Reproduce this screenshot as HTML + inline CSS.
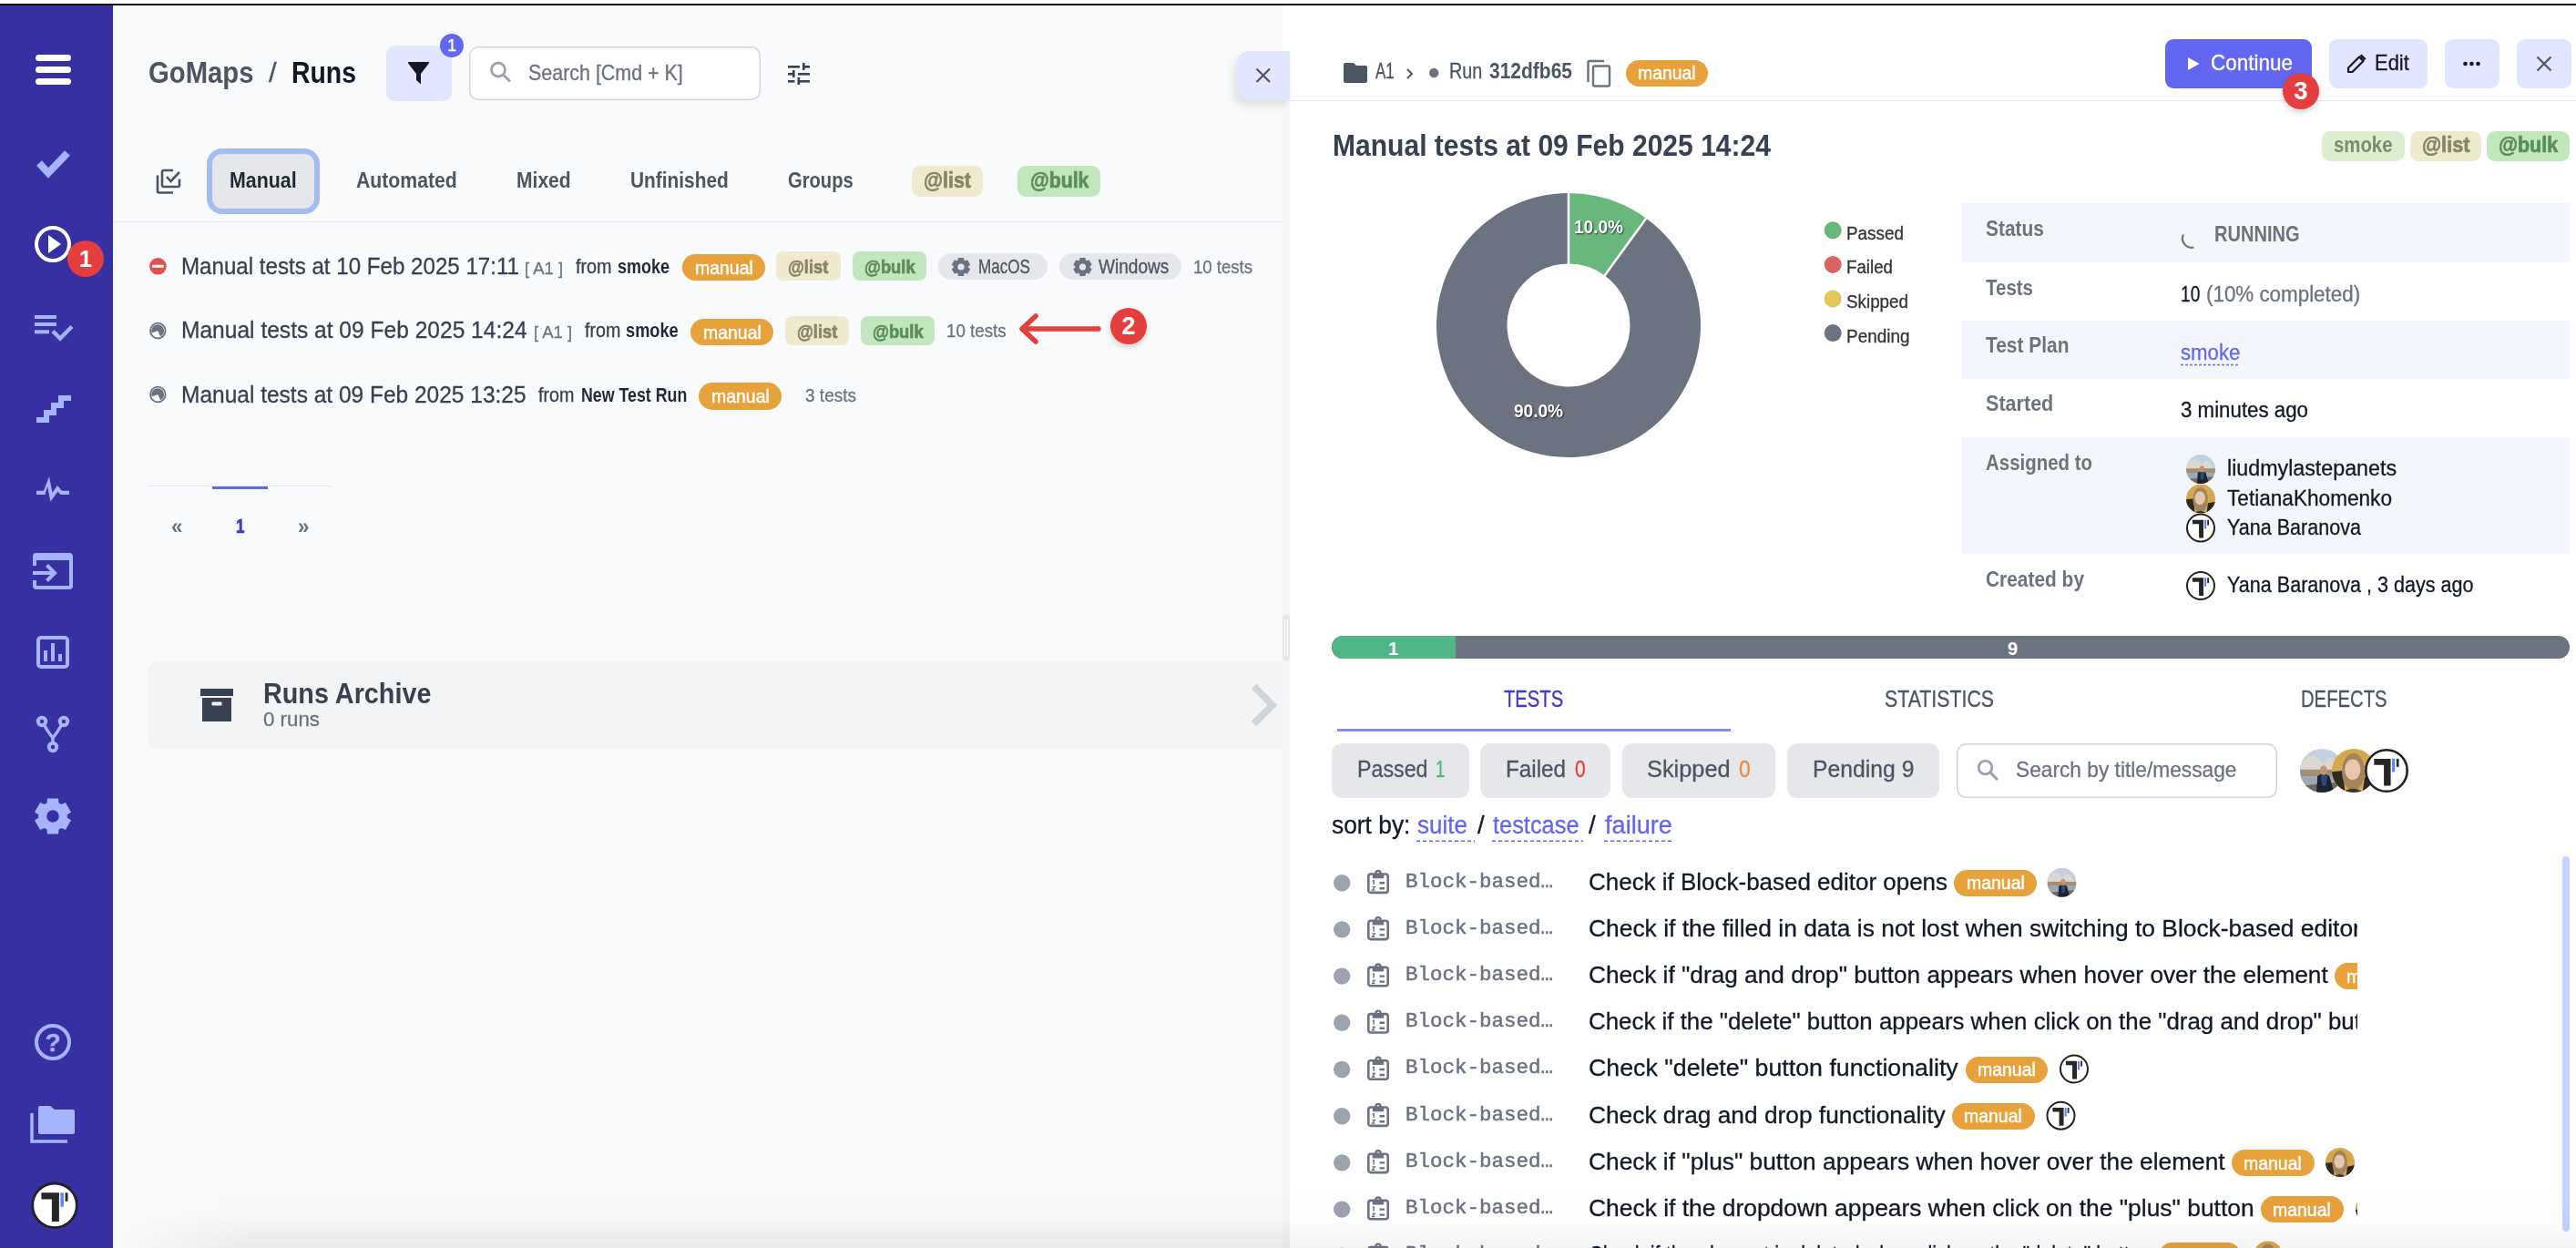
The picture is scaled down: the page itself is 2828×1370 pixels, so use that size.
<!DOCTYPE html>
<html><head><meta charset="utf-8"><title>Runs</title>
<style>
html,body{margin:0;padding:0;width:2828px;height:1370px;overflow:hidden;background:#fff;font-family:'Liberation Sans', sans-serif;}
#root{position:relative;width:2828px;height:1370px;overflow:hidden;}
</style></head><body><div id="root">
<div style="position:absolute;left:0px;top:0px;width:2828px;height:4px;background:#ffffff;border-radius:0px;"></div><div style="position:absolute;left:0px;top:4px;width:2828px;height:2px;background:#111111;border-radius:0px;"></div><div style="position:absolute;left:0px;top:6px;width:124px;height:1364px;background:#3730a3;border-radius:0px;"></div><div style="position:absolute;left:124px;top:6px;width:1284px;height:1364px;background:#f9fafb;border-radius:0px;"></div><div style="position:absolute;left:1408px;top:6px;width:8px;height:104px;background:#ffffff;border-radius:0px;"></div><div style="position:absolute;left:1408px;top:110px;width:8px;height:1260px;background:#f6f6f7;border-radius:0px;"></div><div style="position:absolute;left:1408px;top:674px;width:8px;height:52px;background:#e5e7eb;border-radius:4px;"></div><div style="position:absolute;left:1416px;top:6px;width:1412px;height:1364px;background:#ffffff;border-radius:0px;"></div><div style="position:absolute;left:424px;top:50px;width:72px;height:61px;background:#e0e7ff;border-radius:10px;"></div><div style="position:absolute;left:515px;top:51px;width:320px;height:59px;background:#ffffff;border-radius:10px;box-shadow:inset 0 0 0 1.5px #d1d5db;"></div><div style="position:absolute;left:226.5px;top:162.6px;width:124.80000000000001px;height:72.4px;background:#e5e7eb;border-radius:17px;box-shadow:inset 0 0 0 6px #a3bcf3;"></div><div style="position:absolute;left:1001px;top:182px;width:78px;height:34px;background:#efe9d0;border-radius:9px;"></div><div style="position:absolute;left:1117px;top:182px;width:91px;height:34px;background:#c2e7bf;border-radius:9px;"></div><div style="position:absolute;left:124px;top:243px;width:1284px;height:1px;background:#e5e7eb;border-radius:0px;"></div><div style="position:absolute;left:1358px;top:56px;width:58px;height:54px;background:#e0e7ff;border-radius:14px 0 0 14px;box-shadow:-4px 6px 10px rgba(0,0,0,0.10);"></div><div style="position:absolute;left:749px;top:279px;width:91px;height:28.5px;background:#e8a23b;border-radius:14.25px;"></div><div style="position:absolute;left:852px;top:276px;width:70.70000000000005px;height:31.5px;background:#efe9d0;border-radius:8px;"></div><div style="position:absolute;left:936px;top:276px;width:81px;height:31.5px;background:#c2e7bf;border-radius:8px;"></div><div style="position:absolute;left:1030px;top:277.7px;width:120px;height:29.80000000000001px;background:#e5e7eb;border-radius:15px;"></div><div style="position:absolute;left:1163px;top:277.7px;width:134px;height:29.80000000000001px;background:#e5e7eb;border-radius:15px;"></div><div style="position:absolute;left:758px;top:350px;width:91px;height:29px;background:#e8a23b;border-radius:14.5px;"></div><div style="position:absolute;left:862px;top:347px;width:70px;height:32px;background:#efe9d0;border-radius:8px;"></div><div style="position:absolute;left:945px;top:347px;width:81px;height:32px;background:#c2e7bf;border-radius:8px;"></div><div style="position:absolute;left:1219px;top:338px;width:40px;height:40px;background:#e53e3e;border-radius:50%;box-shadow:0 3px 6px rgba(0,0,0,0.18);"></div><div style="position:absolute;left:767px;top:420px;width:91px;height:30px;background:#e8a23b;border-radius:15.0px;"></div><div style="position:absolute;left:162px;top:533px;width:203px;height:1px;background:#e5e7eb;border-radius:0px;"></div><div style="position:absolute;left:233px;top:534px;width:61px;height:3px;background:#6366f1;border-radius:0px;"></div><div style="position:absolute;left:162px;top:726px;width:1246px;height:96px;background:#f3f4f6;border-radius:12px 0 0 12px;"></div><div style="position:absolute;left:1416px;top:110px;width:1412px;height:1px;background:#e5e7eb;border-radius:0px;"></div><div style="position:absolute;left:1785px;top:66px;width:90px;height:29px;background:#e8a23b;border-radius:14.5px;"></div><div style="position:absolute;left:2377px;top:43px;width:161px;height:54px;background:#6366f1;border-radius:9px;"></div><div style="position:absolute;left:2557px;top:43px;width:108px;height:54px;background:#e0e7ff;border-radius:9px;"></div><div style="position:absolute;left:2684px;top:43px;width:60px;height:54px;background:#e0e7ff;border-radius:9px;"></div><div style="position:absolute;left:2763px;top:43px;width:60px;height:54px;background:#e0e7ff;border-radius:9px;"></div><div style="position:absolute;left:2506px;top:80px;width:40px;height:40px;background:#e53e3e;border-radius:50%;box-shadow:0 3px 6px rgba(0,0,0,0.18);"></div><div style="position:absolute;left:2549px;top:144px;width:91px;height:32.5px;background:#dcedd0;border-radius:9px;"></div><div style="position:absolute;left:2646px;top:144px;width:78px;height:32.5px;background:#efe9d0;border-radius:9px;"></div><div style="position:absolute;left:2730px;top:144px;width:91px;height:32.5px;background:#c2e7bf;border-radius:9px;"></div><div style="position:absolute;left:2154px;top:223px;width:667px;height:65px;background:#f3f6fd;border-radius:0px;"></div><div style="position:absolute;left:2154px;top:352px;width:667px;height:64px;background:#f3f6fd;border-radius:0px;"></div><div style="position:absolute;left:2154px;top:480px;width:667px;height:127.5px;background:#f3f6fd;border-radius:0px;"></div><div style="position:absolute;left:1462px;top:698px;width:1359px;height:24.5px;background:#6b7280;border-radius:12.25px;"></div><div style="position:absolute;left:1462px;top:698px;width:136px;height:24.5px;background:#52b586;border-radius:12.25px 0 0 12.25px;"></div><div style="position:absolute;left:1468px;top:800px;width:432px;height:3px;background:#818cf8;border-radius:0px;"></div><div style="position:absolute;left:1462px;top:816.4px;width:151px;height:59.200000000000045px;background:#e5e7eb;border-radius:11px;"></div><div style="position:absolute;left:1625px;top:816.4px;width:143px;height:59.200000000000045px;background:#e5e7eb;border-radius:11px;"></div><div style="position:absolute;left:1781px;top:816.4px;width:168px;height:59.200000000000045px;background:#e5e7eb;border-radius:11px;"></div><div style="position:absolute;left:1962px;top:816.4px;width:167px;height:59.200000000000045px;background:#e5e7eb;border-radius:11px;"></div><div style="position:absolute;left:2148px;top:816px;width:352px;height:59.5px;background:#fff;border-radius:11px;box-shadow:inset 0 0 0 1.5px #d1d5db;"></div><div style="position:absolute;left:2145.3px;top:954.7px;width:90.5px;height:29.0px;background:#e8a23b;border-radius:14.5px;"></div><div style="position:absolute;left:2563px;top:1057.1000000000001px;width:90.5px;height:29.0px;background:#e8a23b;border-radius:14.5px;"></div><div style="position:absolute;left:2157.5px;top:1159.5px;width:90.5px;height:29.0px;background:#e8a23b;border-radius:14.5px;"></div><div style="position:absolute;left:2143px;top:1210.7px;width:90.5px;height:29.0px;background:#e8a23b;border-radius:14.5px;"></div><div style="position:absolute;left:2450px;top:1261.9px;width:90.5px;height:29.0px;background:#e8a23b;border-radius:14.5px;"></div><div style="position:absolute;left:2482px;top:1313.1000000000001px;width:90.5px;height:29.0px;background:#e8a23b;border-radius:14.5px;"></div><div style="position:absolute;left:2369.7px;top:1364.3000000000002px;width:90.5px;height:29.0px;background:#e8a23b;border-radius:14.5px;"></div>
<svg width="2828" height="1370" viewBox="0 0 2828 1370" style="position:absolute;left:0;top:0">
<rect x="39" y="60" width="39" height="7" rx="3.5" fill="#fff"/><rect x="39" y="73" width="39" height="7" rx="3.5" fill="#fff"/><rect x="39" y="86" width="39" height="7" rx="3.5" fill="#fff"/><path d="M43 179 L53 190 L74 168" fill="none" stroke="#a5b4fc" stroke-width="8" stroke-linecap="butt" stroke-linejoin="miter"/><circle cx="58" cy="268" r="18" fill="none" stroke="#fff" stroke-width="4"/><path d="M53 258 L67 268 L53 278 Z" fill="#fff"/><circle cx="94" cy="284" r="20" fill="#e53e3e"/><rect x="38" y="346" width="24" height="4" fill="#a5b4fc"/><rect x="38" y="354" width="24" height="4" fill="#a5b4fc"/><rect x="38" y="362.3" width="16" height="4" fill="#a5b4fc"/><path d="M58 363.5 L66 371.5 L79 358.5" fill="none" stroke="#a5b4fc" stroke-width="4.5"/><path d="M40 461 L51 461 L51 453 L59 453 L59 445 L67 445 L67 437 L78 437" fill="none" stroke="#a5b4fc" stroke-width="6" stroke-linejoin="miter" stroke-miterlimit="10"/><path d="M40 538.7 L48 538.7 L54 523 L57.5 541 L63 533 L68 538.7 L76 538.7 L76 543 L66.5 543 L63.5 539.5 L55.5 550.5 L52 534 L49.5 543 L40 543 Z" fill="#a5b4fc"/><path d="M38 621 L38 611 Q38 609 40 609 L76 609 Q78 609 78 611 L78 643 Q78 645 76 645 L40 645 Q38 645 38 643 L38 637" fill="none" stroke="#a5b4fc" stroke-width="4"/><rect x="38" y="607.5" width="40" height="7.5" fill="#a5b4fc"/><path d="M36 629 L60 629 M51.5 620.5 L60 629 L51.5 637.5" fill="none" stroke="#a5b4fc" stroke-width="4"/><rect x="42" y="700" width="32" height="32" rx="3" fill="none" stroke="#a5b4fc" stroke-width="4"/><rect x="48" y="714" width="4" height="12" fill="#a5b4fc"/><rect x="56" y="706" width="4" height="20" fill="#a5b4fc"/><rect x="64" y="718" width="4" height="8" fill="#a5b4fc"/><circle cx="46" cy="792" r="4.2" fill="none" stroke="#a5b4fc" stroke-width="4"/><circle cx="70" cy="792" r="4.2" fill="none" stroke="#a5b4fc" stroke-width="4"/><circle cx="58" cy="820" r="4.2" fill="none" stroke="#a5b4fc" stroke-width="4"/><path d="M48.5 796 Q53 804 58 810 Q63 804 67.5 796 M58 810 L58 816" fill="none" stroke="#a5b4fc" stroke-width="3.5"/><path d="M77.99,900.55 L71.93,911.04 L67.39,908.95 L64.52,910.61 L64.06,915.58 L51.94,915.58 L51.48,910.61 L48.61,908.95 L44.07,911.04 L38.01,900.55 L42.09,897.65 L42.09,894.35 L38.01,891.45 L44.07,880.96 L48.61,883.05 L51.48,881.39 L51.94,876.42 L64.06,876.42 L64.52,881.39 L67.39,883.05 L71.93,880.96 L77.99,891.45 L73.91,894.35 L73.91,897.65 Z M64.8,896 A6.8,6.8 0 1,0 51.2,896 A6.8,6.8 0 1,0 64.8,896 Z" fill="#a5b4fc" fill-rule="evenodd"/><circle cx="58" cy="1144" r="18" fill="none" stroke="#a5b4fc" stroke-width="4"/><path d="M35 1222 L35 1253 L74 1253" fill="none" stroke="#a5b4fc" stroke-width="3.5"/><path d="M42 1216 Q42 1214 44 1214 L55 1214 L60 1218 L80 1218 Q82 1218 82 1220 L82 1243 Q82 1245 80 1245 L44 1245 Q42 1245 42 1243 Z" fill="#a5b4fc"/><circle cx="60" cy="1323.3" r="24.3" fill="#fff" stroke="#222" stroke-width="2.8"/><path d="M45.40 1309.30 L64.90 1309.30 L64.90 1340.90 L56.90 1340.90 L56.90 1316.60 L45.40 1316.60 Z" fill="#262626"/><rect x="66.50" y="1309.30" width="3.40" height="15.50" fill="#5b86ee"/><rect x="71.60" y="1309.30" width="2.90" height="9.50" fill="#262626"/><path d="M449 68 Q447 68 448.5 70 L457 81 L457 88 L462 92.5 L462 81 L470.5 70 Q472 68 470 68 Z" fill="#111827"/><circle cx="496" cy="50" r="13" fill="#6366f1"/><circle cx="547" cy="76.5" r="7.5" fill="none" stroke="#9ca3af" stroke-width="2.8"/><path d="M552.5 82 L560 89.5" stroke="#9ca3af" stroke-width="3"/><g fill="#374151"><rect x="865" y="72" width="13" height="2.6"/><rect x="881" y="69" width="2.6" height="8"/><rect x="883" y="72" width="6" height="2.6"/><rect x="865" y="80" width="6" height="2.6"/><rect x="870" y="77" width="2.6" height="8"/><rect x="876" y="80" width="13" height="2.6"/><rect x="865" y="88" width="7.5" height="2.6"/><rect x="875.5" y="85" width="2.6" height="8"/><rect x="877" y="88" width="12" height="2.6"/></g><g fill="none" stroke="#4b5563" stroke-width="2.6"><path d="M173 192.5 L173 210 Q173 211.5 174.5 211.5 L190 211.5"/><path d="M190 187 L180 187 Q178 187 178 189 L178 203 Q178 205 180 205 L195 205 Q197 205 197 203 L197 196.5"/><path d="M183 194 L187.5 199 L197 189"/></g><path d="M1379.5 75.5 L1394 90 M1394 75.5 L1379.5 90" stroke="#4b5563" stroke-width="2.2"/><circle cx="173.4" cy="292.3" r="9.3" fill="#e05252"/><rect x="167" y="290.8" width="12.8" height="3" rx="1" fill="#fff"/><circle cx="173.3" cy="363" r="8.3" fill="none" stroke="#6b7280" stroke-width="1.8"/><path d="M173.3 363 L166.8 365.6 A6.8 6.8 0 0 1 173.3 356.2 A6.8 6.8 0 0 1 180.1 363 A6.8 6.8 0 0 1 176 369.2 Z" fill="#6b7280"/><circle cx="173.3" cy="433" r="8.3" fill="none" stroke="#6b7280" stroke-width="1.8"/><path d="M173.3 433 L166.8 435.6 A6.8 6.8 0 0 1 173.3 426.2 A6.8 6.8 0 0 1 180.1 433 A6.8 6.8 0 0 1 176 439.2 Z" fill="#6b7280"/><path d="M1065.24,295.33 L1062.14,300.70 L1059.81,299.64 L1058.34,300.49 L1058.10,303.03 L1051.90,303.03 L1051.66,300.49 L1050.19,299.64 L1047.86,300.70 L1044.76,295.33 L1046.84,293.85 L1046.84,292.15 L1044.76,290.67 L1047.86,285.30 L1050.19,286.36 L1051.66,285.51 L1051.90,282.97 L1058.10,282.97 L1058.34,285.51 L1059.81,286.36 L1062.14,285.30 L1065.24,290.67 L1063.16,292.15 L1063.16,293.85 Z M1058.6,293 A3.6,3.6 0 1,0 1051.4,293 A3.6,3.6 0 1,0 1058.6,293 Z" fill="#6b7280" fill-rule="evenodd"/><path d="M1198.74,295.33 L1195.64,300.70 L1193.31,299.64 L1191.84,300.49 L1191.60,303.03 L1185.40,303.03 L1185.16,300.49 L1183.69,299.64 L1181.36,300.70 L1178.26,295.33 L1180.34,293.85 L1180.34,292.15 L1178.26,290.67 L1181.36,285.30 L1183.69,286.36 L1185.16,285.51 L1185.40,282.97 L1191.60,282.97 L1191.84,285.51 L1193.31,286.36 L1195.64,285.30 L1198.74,290.67 L1196.66,292.15 L1196.66,293.85 Z M1192.1,293 A3.6,3.6 0 1,0 1184.9,293 A3.6,3.6 0 1,0 1192.1,293 Z" fill="#6b7280" fill-rule="evenodd"/><path d="M1206 361 L1122 361 M1137 347 L1122 361 L1137 375" fill="none" stroke="#e53e3e" stroke-width="5.5" stroke-linecap="round" stroke-linejoin="round"/><rect x="220" y="756" width="36" height="8" fill="#374151"/><rect x="222" y="766" width="32" height="26" fill="#374151"/><rect x="232.5" y="770.5" width="11" height="4" rx="1" fill="#f3f4f6"/><path d="M1376.5 753.5 L1397 774 L1376.5 794.5" fill="none" stroke="#d1d5db" stroke-width="7.5"/><path d="M1410.5 680 L1410.5 720 M1413.5 680 L1413.5 720" stroke="#fff" stroke-width="1"/><path d="M1475 71 Q1475 69 1477 69 L1486 69 L1489 72 L1499 72 Q1501 72 1501 74 L1501 89 Q1501 91 1499 91 L1477 91 Q1475 91 1475 89 Z" fill="#4b5563"/><path d="M1545 76 L1550 81 L1545 86" fill="none" stroke="#4b5563" stroke-width="2"/><circle cx="1574.2" cy="80" r="5.2" fill="#6b7280"/><path d="M1743.5 90 L1743.5 68.5 Q1743.5 67 1745 67 L1761 67" fill="none" stroke="#6b7280" stroke-width="2.4"/><rect x="1749" y="72.5" width="18" height="22" rx="1.5" fill="none" stroke="#6b7280" stroke-width="2.4"/><path d="M2402 63 L2414.5 70 L2402 77 Z" fill="#fff"/><path d="M2578 79 L2578 74.5 L2590 62.5 L2594.5 67 L2582.5 79 Z" fill="none" stroke="#111827" stroke-width="2.2" stroke-linejoin="round"/><path d="M2591.5 60.5 L2596.5 65.5" stroke="#111827" stroke-width="3"/><circle cx="2706.5" cy="70" r="2.3" fill="#111827"/><circle cx="2713.5" cy="70" r="2.3" fill="#111827"/><circle cx="2720.5" cy="70" r="2.3" fill="#111827"/><path d="M2785.5 62.5 L2800.5 77.5 M2800.5 62.5 L2785.5 77.5" stroke="#4b5563" stroke-width="2.2"/><path d="M1807.23 239.69 A145 145 0 1 1 1722.00 212.00 L1722.00 289.50 A67.5 67.5 0 1 0 1761.68 302.39 Z" fill="#6b7280"/><path d="M1722.00 212.00 A145 145 0 0 1 1807.23 239.69 L1761.68 302.39 A67.5 67.5 0 0 0 1722.00 289.50 Z" fill="#68b87c"/><path d="M1722.00 290.50 L1722.00 211.00" stroke="#fff" stroke-width="2.5"/><path d="M1761.09 303.20 L1807.82 238.88" stroke="#fff" stroke-width="2.5"/><circle cx="2012.2" cy="252.8" r="9.5" fill="#68b87c"/><circle cx="2012.2" cy="290.4" r="9.5" fill="#d9645f"/><circle cx="2012.2" cy="328.0" r="9.5" fill="#e4c65a"/><circle cx="2012.2" cy="365.6" r="9.5" fill="#6b7280"/><path d="M2397 257.5 A10 10 0 0 0 2408.5 271.5" fill="none" stroke="#6b7280" stroke-width="2.2"/><path d="M2394 400.5 L2459 400.5" stroke="#6366f1" stroke-width="1.5" stroke-dasharray="3 2"/><defs><clipPath id="c1_1"><circle cx="2416" cy="515" r="16"/></clipPath></defs><g clip-path="url(#c1_1)"><rect x="2400" y="499" width="32" height="32" fill="#c3d0e2"/><path d="M2400.00 511.80 Q2406.40 499.80 2413.60 506.20 L2417.60 510.20 Q2420.80 503.00 2424.80 507.00 L2428.80 512.60 L2428.80 515.00 L2400.00 515.00 Z" fill="#dcd8d0"/><rect x="2400.00" y="514.20" width="32" height="4.80" fill="#a08e76"/><rect x="2400.00" y="519.00" width="32" height="8.00" fill="#9ea8b2"/><path d="M2400.00 526.20 L2432.00 523.00 L2432.00 531.00 L2400.00 531.00 Z" fill="#6e6864"/><path d="M2412.00 531.00 L2412.80 519.00 Q2416.80 515.80 2421.60 519.00 L2424.80 531.00 Z" fill="#1c2230"/><path d="M2415.20 518.20 L2420.00 518.20 L2419.20 526.20 L2416.00 526.20 Z" fill="#2d4a76"/><ellipse cx="2417.28" cy="514.68" rx="2.72" ry="3.52" fill="#c49470"/></g><defs><clipPath id="c2_2"><circle cx="2416" cy="547.5" r="16"/></clipPath></defs><g clip-path="url(#c2_2)"><rect x="2400" y="531.5" width="32" height="32" fill="#d6a84e"/><path d="M2400.00 548.30 L2408.00 547.50 L2409.60 563.50 L2400.00 563.50 Z" fill="#2e2a22"/><path d="M2424.00 552.30 L2432.00 550.70 L2432.00 563.50 L2422.40 563.50 Z" fill="#2a2620"/><ellipse cx="2415.68" cy="548.30" rx="8.32" ry="13.60" fill="#a4845a"/><ellipse cx="2415.20" cy="546.70" rx="5.76" ry="7.52" fill="#e6c6ae"/><path d="M2408.00 563.50 Q2415.20 557.90 2423.20 563.50 Z" fill="#3a3634"/></g><circle cx="2416" cy="579.5" r="15.0" fill="#fff" stroke="#222" stroke-width="2"/><path d="M2406.91 570.78 L2419.05 570.78 L2419.05 590.46 L2414.07 590.46 L2414.07 575.33 L2406.91 575.33 Z" fill="#262626"/><rect x="2420.05" y="570.78" width="2.12" height="9.65" fill="#5b86ee"/><rect x="2423.22" y="570.78" width="1.81" height="5.91" fill="#262626"/><circle cx="2416" cy="643" r="15.0" fill="#fff" stroke="#222" stroke-width="2"/><path d="M2406.91 634.28 L2419.05 634.28 L2419.05 653.96 L2414.07 653.96 L2414.07 638.83 L2406.91 638.83 Z" fill="#262626"/><rect x="2420.05" y="634.28" width="2.12" height="9.65" fill="#5b86ee"/><rect x="2423.22" y="634.28" width="1.81" height="5.91" fill="#262626"/><circle cx="2179.5" cy="842.5" r="7.3" fill="none" stroke="#9ca3af" stroke-width="2.8"/><path d="M2185 848 L2193 856" stroke="#9ca3af" stroke-width="3"/><defs><clipPath id="c1_3"><circle cx="2549" cy="846" r="24"/></clipPath></defs><g clip-path="url(#c1_3)"><rect x="2525" y="822" width="48" height="48" fill="#c3d0e2"/><path d="M2525.00 841.20 Q2534.60 823.20 2545.40 832.80 L2551.40 838.80 Q2556.20 828.00 2562.20 834.00 L2568.20 842.40 L2568.20 846.00 L2525.00 846.00 Z" fill="#dcd8d0"/><rect x="2525.00" y="844.80" width="48" height="7.20" fill="#a08e76"/><rect x="2525.00" y="852.00" width="48" height="12.00" fill="#9ea8b2"/><path d="M2525.00 862.80 L2573.00 858.00 L2573.00 870.00 L2525.00 870.00 Z" fill="#6e6864"/><path d="M2543.00 870.00 L2544.20 852.00 Q2550.20 847.20 2557.40 852.00 L2562.20 870.00 Z" fill="#1c2230"/><path d="M2547.80 850.80 L2555.00 850.80 L2553.80 862.80 L2549.00 862.80 Z" fill="#2d4a76"/><ellipse cx="2550.92" cy="845.52" rx="4.08" ry="5.28" fill="#c49470"/></g><defs><clipPath id="c2_4"><circle cx="2584" cy="846" r="24"/></clipPath></defs><g clip-path="url(#c2_4)"><rect x="2560" y="822" width="48" height="48" fill="#d6a84e"/><path d="M2560.00 847.20 L2572.00 846.00 L2574.40 870.00 L2560.00 870.00 Z" fill="#2e2a22"/><path d="M2596.00 853.20 L2608.00 850.80 L2608.00 870.00 L2593.60 870.00 Z" fill="#2a2620"/><ellipse cx="2583.52" cy="847.20" rx="12.48" ry="20.40" fill="#a4845a"/><ellipse cx="2582.80" cy="844.80" rx="8.64" ry="11.28" fill="#e6c6ae"/><path d="M2572.00 870.00 Q2582.80 861.60 2594.80 870.00 Z" fill="#3a3634"/></g><circle cx="2620" cy="846" r="22.7" fill="#fff" stroke="#222" stroke-width="2.6"/><path d="M2606.37 832.93 L2624.58 832.93 L2624.58 862.44 L2617.11 862.44 L2617.11 839.74 L2606.37 839.74 Z" fill="#262626"/><rect x="2626.07" y="832.93" width="3.18" height="14.47" fill="#5b86ee"/><rect x="2630.83" y="832.93" width="2.71" height="8.87" fill="#262626"/><path d="M1555 923.3 L1619 923.3" stroke="#6366f1" stroke-width="1.6" stroke-dasharray="4 3"/><path d="M1638 923.3 L1738 923.3" stroke="#6366f1" stroke-width="1.6" stroke-dasharray="4 3"/><path d="M1761 923.3 L1836 923.3" stroke="#6366f1" stroke-width="1.6" stroke-dasharray="4 3"/><circle cx="1473.2" cy="969.2" r="9.2" fill="#9ca3af"/><g transform="translate(1501,954.2)" fill="none" stroke="#6b7280" stroke-width="2.6"><rect x="1.3" y="5.3" width="21.4" height="20.4" rx="2.5"/><path d="M7 5.5 L7 8.8 L17 8.8 L17 5.5" stroke-width="2.4" fill="#6b7280"/><circle cx="12" cy="4.3" r="2.6" stroke-width="2.2"/><path d="M13.5 15 L19 15 M13.5 21 L19 21" stroke-width="2.4"/><path d="M5.8 13 L7.2 12.4 L7.2 17" stroke-width="1.4"/><path d="M5.5 19.5 L8.3 19.5 L5.5 23 L8.5 23" stroke-width="1.3"/></g><defs><clipPath id="c1_5"><circle cx="2263.5" cy="968.7" r="16"/></clipPath></defs><g clip-path="url(#c1_5)"><rect x="2247.5" y="952.7" width="32" height="32" fill="#c3d0e2"/><path d="M2247.50 965.50 Q2253.90 953.50 2261.10 959.90 L2265.10 963.90 Q2268.30 956.70 2272.30 960.70 L2276.30 966.30 L2276.30 968.70 L2247.50 968.70 Z" fill="#dcd8d0"/><rect x="2247.50" y="967.90" width="32" height="4.80" fill="#a08e76"/><rect x="2247.50" y="972.70" width="32" height="8.00" fill="#9ea8b2"/><path d="M2247.50 979.90 L2279.50 976.70 L2279.50 984.70 L2247.50 984.70 Z" fill="#6e6864"/><path d="M2259.50 984.70 L2260.30 972.70 Q2264.30 969.50 2269.10 972.70 L2272.30 984.70 Z" fill="#1c2230"/><path d="M2262.70 971.90 L2267.50 971.90 L2266.70 979.90 L2263.50 979.90 Z" fill="#2d4a76"/><ellipse cx="2264.78" cy="968.38" rx="2.72" ry="3.52" fill="#c49470"/></g><circle cx="1473.2" cy="1020.4" r="9.2" fill="#9ca3af"/><g transform="translate(1501,1005.4)" fill="none" stroke="#6b7280" stroke-width="2.6"><rect x="1.3" y="5.3" width="21.4" height="20.4" rx="2.5"/><path d="M7 5.5 L7 8.8 L17 8.8 L17 5.5" stroke-width="2.4" fill="#6b7280"/><circle cx="12" cy="4.3" r="2.6" stroke-width="2.2"/><path d="M13.5 15 L19 15 M13.5 21 L19 21" stroke-width="2.4"/><path d="M5.8 13 L7.2 12.4 L7.2 17" stroke-width="1.4"/><path d="M5.5 19.5 L8.3 19.5 L5.5 23 L8.5 23" stroke-width="1.3"/></g><circle cx="1473.2" cy="1071.6" r="9.2" fill="#9ca3af"/><g transform="translate(1501,1056.6)" fill="none" stroke="#6b7280" stroke-width="2.6"><rect x="1.3" y="5.3" width="21.4" height="20.4" rx="2.5"/><path d="M7 5.5 L7 8.8 L17 8.8 L17 5.5" stroke-width="2.4" fill="#6b7280"/><circle cx="12" cy="4.3" r="2.6" stroke-width="2.2"/><path d="M13.5 15 L19 15 M13.5 21 L19 21" stroke-width="2.4"/><path d="M5.8 13 L7.2 12.4 L7.2 17" stroke-width="1.4"/><path d="M5.5 19.5 L8.3 19.5 L5.5 23 L8.5 23" stroke-width="1.3"/></g><circle cx="1473.2" cy="1122.8" r="9.2" fill="#9ca3af"/><g transform="translate(1501,1107.8)" fill="none" stroke="#6b7280" stroke-width="2.6"><rect x="1.3" y="5.3" width="21.4" height="20.4" rx="2.5"/><path d="M7 5.5 L7 8.8 L17 8.8 L17 5.5" stroke-width="2.4" fill="#6b7280"/><circle cx="12" cy="4.3" r="2.6" stroke-width="2.2"/><path d="M13.5 15 L19 15 M13.5 21 L19 21" stroke-width="2.4"/><path d="M5.8 13 L7.2 12.4 L7.2 17" stroke-width="1.4"/><path d="M5.5 19.5 L8.3 19.5 L5.5 23 L8.5 23" stroke-width="1.3"/></g><circle cx="1473.2" cy="1174.0" r="9.2" fill="#9ca3af"/><g transform="translate(1501,1159.0)" fill="none" stroke="#6b7280" stroke-width="2.6"><rect x="1.3" y="5.3" width="21.4" height="20.4" rx="2.5"/><path d="M7 5.5 L7 8.8 L17 8.8 L17 5.5" stroke-width="2.4" fill="#6b7280"/><circle cx="12" cy="4.3" r="2.6" stroke-width="2.2"/><path d="M13.5 15 L19 15 M13.5 21 L19 21" stroke-width="2.4"/><path d="M5.8 13 L7.2 12.4 L7.2 17" stroke-width="1.4"/><path d="M5.5 19.5 L8.3 19.5 L5.5 23 L8.5 23" stroke-width="1.3"/></g><circle cx="2277" cy="1173.5" r="15.0" fill="#fff" stroke="#222" stroke-width="2"/><path d="M2267.91 1164.78 L2280.05 1164.78 L2280.05 1184.46 L2275.07 1184.46 L2275.07 1169.33 L2267.91 1169.33 Z" fill="#262626"/><rect x="2281.05" y="1164.78" width="2.12" height="9.65" fill="#5b86ee"/><rect x="2284.22" y="1164.78" width="1.81" height="5.91" fill="#262626"/><circle cx="1473.2" cy="1225.2" r="9.2" fill="#9ca3af"/><g transform="translate(1501,1210.2)" fill="none" stroke="#6b7280" stroke-width="2.6"><rect x="1.3" y="5.3" width="21.4" height="20.4" rx="2.5"/><path d="M7 5.5 L7 8.8 L17 8.8 L17 5.5" stroke-width="2.4" fill="#6b7280"/><circle cx="12" cy="4.3" r="2.6" stroke-width="2.2"/><path d="M13.5 15 L19 15 M13.5 21 L19 21" stroke-width="2.4"/><path d="M5.8 13 L7.2 12.4 L7.2 17" stroke-width="1.4"/><path d="M5.5 19.5 L8.3 19.5 L5.5 23 L8.5 23" stroke-width="1.3"/></g><circle cx="2262.5" cy="1224.7" r="15.0" fill="#fff" stroke="#222" stroke-width="2"/><path d="M2253.41 1215.98 L2265.55 1215.98 L2265.55 1235.66 L2260.57 1235.66 L2260.57 1220.53 L2253.41 1220.53 Z" fill="#262626"/><rect x="2266.55" y="1215.98" width="2.12" height="9.65" fill="#5b86ee"/><rect x="2269.72" y="1215.98" width="1.81" height="5.91" fill="#262626"/><circle cx="1473.2" cy="1276.4" r="9.2" fill="#9ca3af"/><g transform="translate(1501,1261.4)" fill="none" stroke="#6b7280" stroke-width="2.6"><rect x="1.3" y="5.3" width="21.4" height="20.4" rx="2.5"/><path d="M7 5.5 L7 8.8 L17 8.8 L17 5.5" stroke-width="2.4" fill="#6b7280"/><circle cx="12" cy="4.3" r="2.6" stroke-width="2.2"/><path d="M13.5 15 L19 15 M13.5 21 L19 21" stroke-width="2.4"/><path d="M5.8 13 L7.2 12.4 L7.2 17" stroke-width="1.4"/><path d="M5.5 19.5 L8.3 19.5 L5.5 23 L8.5 23" stroke-width="1.3"/></g><defs><clipPath id="c2_6"><circle cx="2569" cy="1275.9" r="16"/></clipPath></defs><g clip-path="url(#c2_6)"><rect x="2553" y="1259.9" width="32" height="32" fill="#d6a84e"/><path d="M2553.00 1276.70 L2561.00 1275.90 L2562.60 1291.90 L2553.00 1291.90 Z" fill="#2e2a22"/><path d="M2577.00 1280.70 L2585.00 1279.10 L2585.00 1291.90 L2575.40 1291.90 Z" fill="#2a2620"/><ellipse cx="2568.68" cy="1276.70" rx="8.32" ry="13.60" fill="#a4845a"/><ellipse cx="2568.20" cy="1275.10" rx="5.76" ry="7.52" fill="#e6c6ae"/><path d="M2561.00 1291.90 Q2568.20 1286.30 2576.20 1291.90 Z" fill="#3a3634"/></g><circle cx="1473.2" cy="1327.6" r="9.2" fill="#9ca3af"/><g transform="translate(1501,1312.6)" fill="none" stroke="#6b7280" stroke-width="2.6"><rect x="1.3" y="5.3" width="21.4" height="20.4" rx="2.5"/><path d="M7 5.5 L7 8.8 L17 8.8 L17 5.5" stroke-width="2.4" fill="#6b7280"/><circle cx="12" cy="4.3" r="2.6" stroke-width="2.2"/><path d="M13.5 15 L19 15 M13.5 21 L19 21" stroke-width="2.4"/><path d="M5.8 13 L7.2 12.4 L7.2 17" stroke-width="1.4"/><path d="M5.5 19.5 L8.3 19.5 L5.5 23 L8.5 23" stroke-width="1.3"/></g><defs><clipPath id="c2_7"><circle cx="2602" cy="1327.1000000000001" r="16"/></clipPath></defs><g clip-path="url(#c2_7)"><rect x="2586" y="1311.1000000000001" width="32" height="32" fill="#d6a84e"/><path d="M2586.00 1327.90 L2594.00 1327.10 L2595.60 1343.10 L2586.00 1343.10 Z" fill="#2e2a22"/><path d="M2610.00 1331.90 L2618.00 1330.30 L2618.00 1343.10 L2608.40 1343.10 Z" fill="#2a2620"/><ellipse cx="2601.68" cy="1327.90" rx="8.32" ry="13.60" fill="#a4845a"/><ellipse cx="2601.20" cy="1326.30" rx="5.76" ry="7.52" fill="#e6c6ae"/><path d="M2594.00 1343.10 Q2601.20 1337.50 2609.20 1343.10 Z" fill="#3a3634"/></g><circle cx="1473.2" cy="1378.8" r="9.2" fill="#9ca3af"/><g transform="translate(1501,1363.8)" fill="none" stroke="#6b7280" stroke-width="2.6"><rect x="1.3" y="5.3" width="21.4" height="20.4" rx="2.5"/><path d="M7 5.5 L7 8.8 L17 8.8 L17 5.5" stroke-width="2.4" fill="#6b7280"/><circle cx="12" cy="4.3" r="2.6" stroke-width="2.2"/><path d="M13.5 15 L19 15 M13.5 21 L19 21" stroke-width="2.4"/><path d="M5.8 13 L7.2 12.4 L7.2 17" stroke-width="1.4"/><path d="M5.5 19.5 L8.3 19.5 L5.5 23 L8.5 23" stroke-width="1.3"/></g><defs><clipPath id="c2_8"><circle cx="2490" cy="1378.3000000000002" r="16"/></clipPath></defs><g clip-path="url(#c2_8)"><rect x="2474" y="1362.3000000000002" width="32" height="32" fill="#d6a84e"/><path d="M2474.00 1379.10 L2482.00 1378.30 L2483.60 1394.30 L2474.00 1394.30 Z" fill="#2e2a22"/><path d="M2498.00 1383.10 L2506.00 1381.50 L2506.00 1394.30 L2496.40 1394.30 Z" fill="#2a2620"/><ellipse cx="2489.68" cy="1379.10" rx="8.32" ry="13.60" fill="#a4845a"/><ellipse cx="2489.20" cy="1377.50" rx="5.76" ry="7.52" fill="#e6c6ae"/><path d="M2482.00 1394.30 Q2489.20 1388.70 2497.20 1394.30 Z" fill="#3a3634"/></g>
</svg>
<span style="position:absolute;left:87.0px;top:271.8px;font:700 25px/1 'Liberation Sans', sans-serif;color:#fff;white-space:pre;">1</span><span style="position:absolute;left:49.4px;top:1131.3px;font:700 28px/1 'Liberation Sans', sans-serif;color:#a5b4fc;white-space:pre;-webkit-text-stroke:0.3px #a5b4fc;">?</span><span style="position:absolute;left:162.8px;top:62.8px;font:700 33px/1 'Liberation Sans', sans-serif;color:#4b5563;white-space:pre;transform:scaleX(0.8872);transform-origin:0 0;">GoMaps</span><span style="position:absolute;left:294.8px;top:65.3px;font:400 30px/1 'Liberation Sans', sans-serif;color:#4b5563;white-space:pre;transform:scaleX(1.0433);transform-origin:0 0;-webkit-text-stroke:0.3px #4b5563;">/</span><span style="position:absolute;left:320.0px;top:62.8px;font:700 33px/1 'Liberation Sans', sans-serif;color:#111827;white-space:pre;transform:scaleX(0.8606);transform-origin:0 0;">Runs</span><span style="position:absolute;left:491.0px;top:41.3px;font:400 18px/1 'Liberation Sans', sans-serif;color:#fff;white-space:pre;-webkit-text-stroke:0.3px #fff;">1</span><span style="position:absolute;left:580.0px;top:67.6px;font:400 24px/1 'Liberation Sans', sans-serif;color:#6b7280;white-space:pre;transform:scaleX(0.8933);transform-origin:0 0;-webkit-text-stroke:0.3px #6b7280;">Search [Cmd + K]</span><span style="position:absolute;left:252.3px;top:186.2px;font:700 24px/1 'Liberation Sans', sans-serif;color:#1f2937;white-space:pre;transform:scaleX(0.8902);transform-origin:0 0;">Manual</span><span style="position:absolute;left:390.5px;top:186.2px;font:700 24px/1 'Liberation Sans', sans-serif;color:#4b5563;white-space:pre;transform:scaleX(0.8840);transform-origin:0 0;">Automated</span><span style="position:absolute;left:566.5px;top:186.2px;font:700 24px/1 'Liberation Sans', sans-serif;color:#4b5563;white-space:pre;transform:scaleX(0.8777);transform-origin:0 0;">Mixed</span><span style="position:absolute;left:691.7px;top:186.2px;font:700 24px/1 'Liberation Sans', sans-serif;color:#4b5563;white-space:pre;transform:scaleX(0.8694);transform-origin:0 0;">Unfinished</span><span style="position:absolute;left:864.7px;top:186.2px;font:700 24px/1 'Liberation Sans', sans-serif;color:#4b5563;white-space:pre;transform:scaleX(0.8402);transform-origin:0 0;">Groups</span><span style="position:absolute;left:1014.0px;top:185.7px;font:700 24px/1 'Liberation Sans', sans-serif;color:#8a8467;white-space:pre;transform:scaleX(0.8953);transform-origin:0 0;-webkit-text-stroke:0.7px #8a8467;">@list</span><span style="position:absolute;left:1131.0px;top:185.7px;font:700 24px/1 'Liberation Sans', sans-serif;color:#5d8b60;white-space:pre;transform:scaleX(0.8854);transform-origin:0 0;-webkit-text-stroke:0.7px #5d8b60;">@bulk</span><span style="position:absolute;left:198.7px;top:278.6px;font:400 26.5px/1 'Liberation Sans', sans-serif;color:#374151;white-space:pre;transform:scaleX(0.9102);transform-origin:0 0;-webkit-text-stroke:0.3px #374151;">Manual tests at 10 Feb 2025 17:11</span><span style="position:absolute;left:198.7px;top:348.6px;font:400 26.5px/1 'Liberation Sans', sans-serif;color:#374151;white-space:pre;transform:scaleX(0.9268);transform-origin:0 0;-webkit-text-stroke:0.3px #374151;">Manual tests at 09 Feb 2025 14:24</span><span style="position:absolute;left:198.7px;top:419.6px;font:400 26.5px/1 'Liberation Sans', sans-serif;color:#374151;white-space:pre;transform:scaleX(0.9244);transform-origin:0 0;-webkit-text-stroke:0.3px #374151;">Manual tests at 09 Feb 2025 13:25</span><span style="position:absolute;left:576.4px;top:284.9px;font:400 19px/1 'Liberation Sans', sans-serif;color:#6b7280;white-space:pre;transform:scaleX(0.9698);transform-origin:0 0;-webkit-text-stroke:0.3px #6b7280;">[ A1 ]</span><span style="position:absolute;left:586.0px;top:354.9px;font:400 19px/1 'Liberation Sans', sans-serif;color:#6b7280;white-space:pre;transform:scaleX(0.9698);transform-origin:0 0;-webkit-text-stroke:0.3px #6b7280;">[ A1 ]</span><span style="position:absolute;left:632.0px;top:282.4px;font:400 22px/1 'Liberation Sans', sans-serif;color:#374151;white-space:pre;transform:scaleX(0.9000);transform-origin:0 0;-webkit-text-stroke:0.3px #374151;">from</span><span style="position:absolute;left:678.4px;top:282.4px;font:700 22px/1 'Liberation Sans', sans-serif;color:#1f2937;white-space:pre;transform:scaleX(0.8177);transform-origin:0 0;">smoke</span><span style="position:absolute;left:641.7px;top:352.4px;font:400 22px/1 'Liberation Sans', sans-serif;color:#374151;white-space:pre;transform:scaleX(0.8932);transform-origin:0 0;-webkit-text-stroke:0.3px #374151;">from</span><span style="position:absolute;left:687.3px;top:352.4px;font:700 22px/1 'Liberation Sans', sans-serif;color:#1f2937;white-space:pre;transform:scaleX(0.8277);transform-origin:0 0;">smoke</span><span style="position:absolute;left:591.4px;top:423.4px;font:400 22px/1 'Liberation Sans', sans-serif;color:#374151;white-space:pre;transform:scaleX(0.8955);transform-origin:0 0;-webkit-text-stroke:0.3px #374151;">from</span><span style="position:absolute;left:637.6px;top:423.4px;font:700 22px/1 'Liberation Sans', sans-serif;color:#1f2937;white-space:pre;transform:scaleX(0.8086);transform-origin:0 0;">New Test Run</span><span style="position:absolute;left:762.6px;top:282.7px;font:400 21px/1 'Liberation Sans', sans-serif;color:#fff;white-space:pre;transform:scaleX(0.9263);transform-origin:0 0;-webkit-text-stroke:0.45px #fff;">manual</span><span style="position:absolute;left:865.2px;top:282.2px;font:700 21px/1 'Liberation Sans', sans-serif;color:#8a8467;white-space:pre;transform:scaleX(0.8717);transform-origin:0 0;-webkit-text-stroke:0.7px #8a8467;">@list</span><span style="position:absolute;left:948.7px;top:282.2px;font:700 21px/1 'Liberation Sans', sans-serif;color:#5d8b60;white-space:pre;transform:scaleX(0.8736);transform-origin:0 0;-webkit-text-stroke:0.7px #5d8b60;">@bulk</span><span style="position:absolute;left:1074.3px;top:281.9px;font:400 22px/1 'Liberation Sans', sans-serif;color:#4b5563;white-space:pre;transform:scaleX(0.7771);transform-origin:0 0;-webkit-text-stroke:0.3px #4b5563;">MacOS</span><span style="position:absolute;left:1206.3px;top:281.9px;font:400 22px/1 'Liberation Sans', sans-serif;color:#4b5563;white-space:pre;transform:scaleX(0.8661);transform-origin:0 0;-webkit-text-stroke:0.3px #4b5563;">Windows</span><span style="position:absolute;left:1310.0px;top:281.7px;font:400 21px/1 'Liberation Sans', sans-serif;color:#6b7280;white-space:pre;transform:scaleX(0.8838);transform-origin:0 0;-webkit-text-stroke:0.3px #6b7280;">10 tests</span><span style="position:absolute;left:771.6px;top:353.7px;font:400 21px/1 'Liberation Sans', sans-serif;color:#fff;white-space:pre;transform:scaleX(0.9263);transform-origin:0 0;-webkit-text-stroke:0.45px #fff;">manual</span><span style="position:absolute;left:874.9px;top:353.2px;font:700 21px/1 'Liberation Sans', sans-serif;color:#8a8467;white-space:pre;transform:scaleX(0.8717);transform-origin:0 0;-webkit-text-stroke:0.7px #8a8467;">@list</span><span style="position:absolute;left:957.7px;top:353.2px;font:700 21px/1 'Liberation Sans', sans-serif;color:#5d8b60;white-space:pre;transform:scaleX(0.8736);transform-origin:0 0;-webkit-text-stroke:0.7px #5d8b60;">@bulk</span><span style="position:absolute;left:1039.4px;top:352.2px;font:400 21px/1 'Liberation Sans', sans-serif;color:#6b7280;white-space:pre;transform:scaleX(0.8920);transform-origin:0 0;-webkit-text-stroke:0.3px #6b7280;">10 tests</span><span style="position:absolute;left:1231.5px;top:345.1px;font:700 27px/1 'Liberation Sans', sans-serif;color:#fff;white-space:pre;">2</span><span style="position:absolute;left:780.6px;top:424.2px;font:400 21px/1 'Liberation Sans', sans-serif;color:#fff;white-space:pre;transform:scaleX(0.9263);transform-origin:0 0;-webkit-text-stroke:0.45px #fff;">manual</span><span style="position:absolute;left:883.7px;top:423.2px;font:400 21px/1 'Liberation Sans', sans-serif;color:#6b7280;white-space:pre;transform:scaleX(0.9052);transform-origin:0 0;-webkit-text-stroke:0.3px #6b7280;">3 tests</span><span style="position:absolute;left:188.4px;top:565.7px;font:700 24px/1 'Liberation Sans', sans-serif;color:#6b7280;white-space:pre;transform:scaleX(0.9363);transform-origin:0 0;">«</span><span style="position:absolute;left:258.5px;top:566.9px;font:700 22.5px/1 'Liberation Sans', sans-serif;color:#4338ca;white-space:pre;transform:scaleX(0.7591);transform-origin:0 0;-webkit-text-stroke:0.7px #4338ca;">1</span><span style="position:absolute;left:326.6px;top:565.7px;font:700 24px/1 'Liberation Sans', sans-serif;color:#6b7280;white-space:pre;transform:scaleX(0.9363);transform-origin:0 0;">»</span><span style="position:absolute;left:288.6px;top:745.5px;font:700 31.5px/1 'Liberation Sans', sans-serif;color:#374151;white-space:pre;transform:scaleX(0.9134);transform-origin:0 0;">Runs Archive</span><span style="position:absolute;left:288.6px;top:779.8px;font:400 21.5px/1 'Liberation Sans', sans-serif;color:#6b7280;white-space:pre;transform:scaleX(1.0375);transform-origin:0 0;-webkit-text-stroke:0.3px #6b7280;">0 runs</span><span style="position:absolute;left:1509.7px;top:66.8px;font:400 23px/1 'Liberation Sans', sans-serif;color:#4b5563;white-space:pre;transform:scaleX(0.7393);transform-origin:0 0;-webkit-text-stroke:0.3px #4b5563;">A1</span><span style="position:absolute;left:1590.7px;top:66.8px;font:400 23px/1 'Liberation Sans', sans-serif;color:#4b5563;white-space:pre;transform:scaleX(0.8603);transform-origin:0 0;-webkit-text-stroke:0.3px #4b5563;">Run</span><span style="position:absolute;left:1635.0px;top:66.8px;font:700 23px/1 'Liberation Sans', sans-serif;color:#4b5563;white-space:pre;transform:scaleX(0.9126);transform-origin:0 0;">312dfb65</span><span style="position:absolute;left:1798.2px;top:69.2px;font:400 21px/1 'Liberation Sans', sans-serif;color:#fff;white-space:pre;transform:scaleX(0.9234);transform-origin:0 0;-webkit-text-stroke:0.45px #fff;">manual</span><span style="position:absolute;left:2426.6px;top:56.7px;font:400 24px/1 'Liberation Sans', sans-serif;color:#fff;white-space:pre;transform:scaleX(0.9368);transform-origin:0 0;-webkit-text-stroke:0.3px #fff;">Continue</span><span style="position:absolute;left:2607.0px;top:56.7px;font:400 24px/1 'Liberation Sans', sans-serif;color:#111827;white-space:pre;transform:scaleX(0.9140);transform-origin:0 0;-webkit-text-stroke:0.3px #111827;">Edit</span><span style="position:absolute;left:2518.5px;top:87.1px;font:700 27px/1 'Liberation Sans', sans-serif;color:#fff;white-space:pre;">3</span><span style="position:absolute;left:1463.0px;top:144.3px;font:700 32.5px/1 'Liberation Sans', sans-serif;color:#374151;white-space:pre;transform:scaleX(0.9245);transform-origin:0 0;">Manual tests at 09 Feb 2025 14:24</span><span style="position:absolute;left:2562.2px;top:147.5px;font:700 23px/1 'Liberation Sans', sans-serif;color:#7b8b6c;white-space:pre;transform:scaleX(0.8850);transform-origin:0 0;">smoke</span><span style="position:absolute;left:2658.8px;top:147.5px;font:700 23px/1 'Liberation Sans', sans-serif;color:#8a8467;white-space:pre;transform:scaleX(0.9414);transform-origin:0 0;-webkit-text-stroke:0.7px #8a8467;">@list</span><span style="position:absolute;left:2742.9px;top:147.5px;font:700 23px/1 'Liberation Sans', sans-serif;color:#5d8b60;white-space:pre;transform:scaleX(0.9353);transform-origin:0 0;-webkit-text-stroke:0.7px #5d8b60;">@bulk</span><span style="position:absolute;left:1728.0px;top:238.0px;font:700 21px/1 'Liberation Sans', sans-serif;color:#fff;white-space:pre;transform:scaleX(0.9069);transform-origin:0 0;text-shadow:1px 1px 2px rgba(0,0,0,0.7);">10.0%</span><span style="position:absolute;left:1662.0px;top:440.4px;font:700 21px/1 'Liberation Sans', sans-serif;color:#fff;white-space:pre;transform:scaleX(0.9069);transform-origin:0 0;text-shadow:1px 1px 2px rgba(0,0,0,0.7);">90.0%</span><span style="position:absolute;left:2027.0px;top:245.8px;font:400 20.5px/1 'Liberation Sans', sans-serif;color:#333333;white-space:pre;transform:scaleX(0.9214);transform-origin:0 0;-webkit-text-stroke:0.3px #333333;">Passed</span><span style="position:absolute;left:2027.0px;top:283.4px;font:400 20.5px/1 'Liberation Sans', sans-serif;color:#333333;white-space:pre;transform:scaleX(0.9134);transform-origin:0 0;-webkit-text-stroke:0.3px #333333;">Failed</span><span style="position:absolute;left:2027.0px;top:321.0px;font:400 20.5px/1 'Liberation Sans', sans-serif;color:#333333;white-space:pre;transform:scaleX(0.9179);transform-origin:0 0;-webkit-text-stroke:0.3px #333333;">Skipped</span><span style="position:absolute;left:2027.0px;top:358.6px;font:400 20.5px/1 'Liberation Sans', sans-serif;color:#333333;white-space:pre;transform:scaleX(0.9251);transform-origin:0 0;-webkit-text-stroke:0.3px #333333;">Pending</span><span style="position:absolute;left:2180.0px;top:239.9px;font:700 23px/1 'Liberation Sans', sans-serif;color:#6b7280;white-space:pre;transform:scaleX(0.9105);transform-origin:0 0;">Status</span><span style="position:absolute;left:2180.0px;top:304.8px;font:700 23px/1 'Liberation Sans', sans-serif;color:#6b7280;white-space:pre;transform:scaleX(0.8908);transform-origin:0 0;">Tests</span><span style="position:absolute;left:2180.0px;top:368.1px;font:700 23px/1 'Liberation Sans', sans-serif;color:#6b7280;white-space:pre;transform:scaleX(0.9090);transform-origin:0 0;">Test Plan</span><span style="position:absolute;left:2180.0px;top:432.2px;font:700 23px/1 'Liberation Sans', sans-serif;color:#6b7280;white-space:pre;transform:scaleX(0.9376);transform-origin:0 0;">Started</span><span style="position:absolute;left:2180.0px;top:497.2px;font:700 23px/1 'Liberation Sans', sans-serif;color:#6b7280;white-space:pre;transform:scaleX(0.8889);transform-origin:0 0;">Assigned to</span><span style="position:absolute;left:2180.0px;top:624.5px;font:700 23px/1 'Liberation Sans', sans-serif;color:#6b7280;white-space:pre;transform:scaleX(0.9085);transform-origin:0 0;">Created by</span><span style="position:absolute;left:2431.0px;top:245.8px;font:700 23px/1 'Liberation Sans', sans-serif;color:#6b7280;white-space:pre;transform:scaleX(0.8721);transform-origin:0 0;">RUNNING</span><span style="position:absolute;left:2393.7px;top:311.7px;font:400 23.5px/1 'Liberation Sans', sans-serif;color:#111827;white-space:pre;transform:scaleX(0.8148);transform-origin:0 0;-webkit-text-stroke:0.3px #111827;">10</span><span style="position:absolute;left:2421.8px;top:311.7px;font:400 23.5px/1 'Liberation Sans', sans-serif;color:#6b7280;white-space:pre;transform:scaleX(0.9519);transform-origin:0 0;-webkit-text-stroke:0.3px #6b7280;">(10% completed)</span><span style="position:absolute;left:2393.7px;top:375.5px;font:400 23.5px/1 'Liberation Sans', sans-serif;color:#6366f1;white-space:pre;transform:scaleX(0.9434);transform-origin:0 0;-webkit-text-stroke:0.3px #6366f1;">smoke</span><span style="position:absolute;left:2393.7px;top:439.4px;font:400 23.5px/1 'Liberation Sans', sans-serif;color:#111827;white-space:pre;transform:scaleX(0.9484);transform-origin:0 0;-webkit-text-stroke:0.3px #111827;">3 minutes ago</span><span style="position:absolute;left:2445.0px;top:503.4px;font:400 23.5px/1 'Liberation Sans', sans-serif;color:#111827;white-space:pre;transform:scaleX(0.9888);transform-origin:0 0;-webkit-text-stroke:0.3px #111827;">liudmylastepanets</span><span style="position:absolute;left:2445.0px;top:535.9px;font:400 23.5px/1 'Liberation Sans', sans-serif;color:#111827;white-space:pre;transform:scaleX(0.9621);transform-origin:0 0;-webkit-text-stroke:0.3px #111827;">TetianaKhomenko</span><span style="position:absolute;left:2445.0px;top:567.6px;font:400 23.5px/1 'Liberation Sans', sans-serif;color:#111827;white-space:pre;transform:scaleX(0.9172);transform-origin:0 0;-webkit-text-stroke:0.3px #111827;">Yana Baranova</span><span style="position:absolute;left:2445.0px;top:631.1px;font:400 23.5px/1 'Liberation Sans', sans-serif;color:#111827;white-space:pre;transform:scaleX(0.9178);transform-origin:0 0;-webkit-text-stroke:0.3px #111827;">Yana Baranova , 3 days ago</span><span style="position:absolute;left:1524.0px;top:702.1px;font:700 20px/1 'Liberation Sans', sans-serif;color:#fff;white-space:pre;">1</span><span style="position:absolute;left:2204.1px;top:702.1px;font:700 20px/1 'Liberation Sans', sans-serif;color:#fff;white-space:pre;">9</span><span style="position:absolute;left:1651.4px;top:754.9px;font:400 25.5px/1 'Liberation Sans', sans-serif;color:#4338ca;white-space:pre;transform:scaleX(0.7934);transform-origin:0 0;-webkit-text-stroke:0.3px #4338ca;">TESTS</span><span style="position:absolute;left:2068.7px;top:754.9px;font:400 25.5px/1 'Liberation Sans', sans-serif;color:#4b5563;white-space:pre;transform:scaleX(0.8359);transform-origin:0 0;-webkit-text-stroke:0.3px #4b5563;">STATISTICS</span><span style="position:absolute;left:2526.3px;top:754.9px;font:400 25.5px/1 'Liberation Sans', sans-serif;color:#4b5563;white-space:pre;transform:scaleX(0.7941);transform-origin:0 0;-webkit-text-stroke:0.3px #4b5563;">DEFECTS</span><span style="position:absolute;left:1489.7px;top:832.4px;font:400 25.5px/1 'Liberation Sans', sans-serif;color:#4b5563;white-space:pre;transform:scaleX(0.9112);transform-origin:0 0;-webkit-text-stroke:0.3px #4b5563;">Passed</span><span style="position:absolute;left:1575.9px;top:832.4px;font:400 25.5px/1 'Liberation Sans', sans-serif;color:#48bb78;white-space:pre;transform:scaleX(0.7262);transform-origin:0 0;-webkit-text-stroke:0.3px #48bb78;">1</span><span style="position:absolute;left:1653.3px;top:832.4px;font:400 25.5px/1 'Liberation Sans', sans-serif;color:#4b5563;white-space:pre;transform:scaleX(0.9502);transform-origin:0 0;-webkit-text-stroke:0.3px #4b5563;">Failed</span><span style="position:absolute;left:1728.6px;top:832.4px;font:400 25.5px/1 'Liberation Sans', sans-serif;color:#e53e3e;white-space:pre;transform:scaleX(0.8249);transform-origin:0 0;-webkit-text-stroke:0.3px #e53e3e;">0</span><span style="position:absolute;left:1808.2px;top:832.4px;font:400 25.5px/1 'Liberation Sans', sans-serif;color:#4b5563;white-space:pre;transform:scaleX(0.9940);transform-origin:0 0;-webkit-text-stroke:0.3px #4b5563;">Skipped</span><span style="position:absolute;left:1908.8px;top:832.4px;font:400 25.5px/1 'Liberation Sans', sans-serif;color:#ed8936;white-space:pre;transform:scaleX(0.8954);transform-origin:0 0;-webkit-text-stroke:0.3px #ed8936;">0</span><span style="position:absolute;left:1989.5px;top:832.4px;font:400 25.5px/1 'Liberation Sans', sans-serif;color:#4b5563;white-space:pre;transform:scaleX(0.9700);transform-origin:0 0;-webkit-text-stroke:0.3px #4b5563;">Pending 9</span><span style="position:absolute;left:2213.0px;top:833.0px;font:400 24px/1 'Liberation Sans', sans-serif;color:#6b7280;white-space:pre;transform:scaleX(0.9464);transform-origin:0 0;-webkit-text-stroke:0.3px #6b7280;">Search by title/message</span><span style="position:absolute;left:1462.4px;top:893.1px;font:400 27px/1 'Liberation Sans', sans-serif;color:#111827;white-space:pre;transform:scaleX(0.9759);transform-origin:0 0;-webkit-text-stroke:0.3px #111827;">sort by:</span><span style="position:absolute;left:1556.0px;top:893.1px;font:400 27px/1 'Liberation Sans', sans-serif;color:#6366f1;white-space:pre;transform:scaleX(0.9643);transform-origin:0 0;-webkit-text-stroke:0.3px #6366f1;">suite</span><span style="position:absolute;left:1622.0px;top:893.1px;font:400 27px/1 'Liberation Sans', sans-serif;color:#111827;white-space:pre;transform:scaleX(1.0260);transform-origin:0 0;-webkit-text-stroke:0.3px #111827;">/</span><span style="position:absolute;left:1639.0px;top:893.1px;font:400 27px/1 'Liberation Sans', sans-serif;color:#6366f1;white-space:pre;transform:scaleX(0.9398);transform-origin:0 0;-webkit-text-stroke:0.3px #6366f1;">testcase</span><span style="position:absolute;left:1743.8px;top:893.1px;font:400 27px/1 'Liberation Sans', sans-serif;color:#111827;white-space:pre;transform:scaleX(1.0260);transform-origin:0 0;-webkit-text-stroke:0.3px #111827;">/</span><span style="position:absolute;left:1761.5px;top:893.1px;font:400 27px/1 'Liberation Sans', sans-serif;color:#6366f1;white-space:pre;transform:scaleX(1.0049);transform-origin:0 0;-webkit-text-stroke:0.3px #6366f1;">failure</span><span style="position:absolute;left:1543.4px;top:956.5px;font:400 22.6px/1 'Liberation Mono', monospace;color:#6b7280;white-space:pre;transform:scaleX(0.9954);transform-origin:0 0;-webkit-text-stroke:0.5px #6b7280;">Block-based…</span><span style="position:absolute;left:1744.3px;top:954.5px;font:400 26px/1 'Liberation Sans', sans-serif;color:#111827;white-space:pre;transform:scaleX(0.9986);transform-origin:0 0;-webkit-text-stroke:0.3px #111827;">Check if Block-based editor opens</span><span style="position:absolute;left:2158.7px;top:958.4px;font:400 21px/1 'Liberation Sans', sans-serif;color:#fff;white-space:pre;transform:scaleX(0.9263);transform-origin:0 0;-webkit-text-stroke:0.45px #fff;">manual</span><span style="position:absolute;left:1543.4px;top:1007.7px;font:400 22.6px/1 'Liberation Mono', monospace;color:#6b7280;white-space:pre;transform:scaleX(0.9954);transform-origin:0 0;-webkit-text-stroke:0.5px #6b7280;">Block-based…</span><span style="position:absolute;left:1744.3px;top:1005.7px;font:400 26px/1 'Liberation Sans', sans-serif;color:#111827;white-space:pre;transform:scaleX(1.0150);transform-origin:0 0;-webkit-text-stroke:0.3px #111827;">Check if the filled in data is not lost when switching to Block-based editor</span><span style="position:absolute;left:1543.4px;top:1058.9px;font:400 22.6px/1 'Liberation Mono', monospace;color:#6b7280;white-space:pre;transform:scaleX(0.9954);transform-origin:0 0;-webkit-text-stroke:0.5px #6b7280;">Block-based…</span><span style="position:absolute;left:1744.3px;top:1056.9px;font:400 26px/1 'Liberation Sans', sans-serif;color:#111827;white-space:pre;transform:scaleX(1.0087);transform-origin:0 0;-webkit-text-stroke:0.3px #111827;">Check if "drag and drop" button appears when hover over the element</span><span style="position:absolute;left:2576.3px;top:1060.8px;font:400 21px/1 'Liberation Sans', sans-serif;color:#fff;white-space:pre;transform:scaleX(0.9263);transform-origin:0 0;-webkit-text-stroke:0.45px #fff;">manual</span><span style="position:absolute;left:1543.4px;top:1110.1px;font:400 22.6px/1 'Liberation Mono', monospace;color:#6b7280;white-space:pre;transform:scaleX(0.9954);transform-origin:0 0;-webkit-text-stroke:0.5px #6b7280;">Block-based…</span><span style="position:absolute;left:1744.3px;top:1108.1px;font:400 26px/1 'Liberation Sans', sans-serif;color:#111827;white-space:pre;transform:scaleX(0.9950);transform-origin:0 0;-webkit-text-stroke:0.3px #111827;">Check if the "delete" button appears when click on the "drag and drop" button</span><span style="position:absolute;left:1543.4px;top:1161.3px;font:400 22.6px/1 'Liberation Mono', monospace;color:#6b7280;white-space:pre;transform:scaleX(0.9954);transform-origin:0 0;-webkit-text-stroke:0.5px #6b7280;">Block-based…</span><span style="position:absolute;left:1744.3px;top:1159.3px;font:400 26px/1 'Liberation Sans', sans-serif;color:#111827;white-space:pre;transform:scaleX(1.0290);transform-origin:0 0;-webkit-text-stroke:0.3px #111827;">Check "delete" button functionality</span><span style="position:absolute;left:2170.8px;top:1163.2px;font:400 21px/1 'Liberation Sans', sans-serif;color:#fff;white-space:pre;transform:scaleX(0.9263);transform-origin:0 0;-webkit-text-stroke:0.45px #fff;">manual</span><span style="position:absolute;left:1543.4px;top:1212.5px;font:400 22.6px/1 'Liberation Mono', monospace;color:#6b7280;white-space:pre;transform:scaleX(0.9954);transform-origin:0 0;-webkit-text-stroke:0.5px #6b7280;">Block-based…</span><span style="position:absolute;left:1744.3px;top:1210.5px;font:400 26px/1 'Liberation Sans', sans-serif;color:#111827;white-space:pre;transform:scaleX(1.0112);transform-origin:0 0;-webkit-text-stroke:0.3px #111827;">Check drag and drop functionality</span><span style="position:absolute;left:2156.3px;top:1214.4px;font:400 21px/1 'Liberation Sans', sans-serif;color:#fff;white-space:pre;transform:scaleX(0.9263);transform-origin:0 0;-webkit-text-stroke:0.45px #fff;">manual</span><span style="position:absolute;left:1543.4px;top:1263.7px;font:400 22.6px/1 'Liberation Mono', monospace;color:#6b7280;white-space:pre;transform:scaleX(0.9954);transform-origin:0 0;-webkit-text-stroke:0.5px #6b7280;">Block-based…</span><span style="position:absolute;left:1744.3px;top:1261.7px;font:400 26px/1 'Liberation Sans', sans-serif;color:#111827;white-space:pre;transform:scaleX(1.0118);transform-origin:0 0;-webkit-text-stroke:0.3px #111827;">Check if "plus" button appears when hover over the element</span><span style="position:absolute;left:2463.3px;top:1265.6px;font:400 21px/1 'Liberation Sans', sans-serif;color:#fff;white-space:pre;transform:scaleX(0.9263);transform-origin:0 0;-webkit-text-stroke:0.45px #fff;">manual</span><span style="position:absolute;left:1543.4px;top:1314.9px;font:400 22.6px/1 'Liberation Mono', monospace;color:#6b7280;white-space:pre;transform:scaleX(0.9954);transform-origin:0 0;-webkit-text-stroke:0.5px #6b7280;">Block-based…</span><span style="position:absolute;left:1744.3px;top:1312.9px;font:400 26px/1 'Liberation Sans', sans-serif;color:#111827;white-space:pre;transform:scaleX(1.0156);transform-origin:0 0;-webkit-text-stroke:0.3px #111827;">Check if the dropdown appears when click on the "plus" button</span><span style="position:absolute;left:2495.3px;top:1316.8px;font:400 21px/1 'Liberation Sans', sans-serif;color:#fff;white-space:pre;transform:scaleX(0.9263);transform-origin:0 0;-webkit-text-stroke:0.45px #fff;">manual</span><span style="position:absolute;left:1543.4px;top:1366.1px;font:400 22.6px/1 'Liberation Mono', monospace;color:#6b7280;white-space:pre;transform:scaleX(0.9954);transform-origin:0 0;-webkit-text-stroke:0.5px #6b7280;">Block-based…</span><span style="position:absolute;left:1744.3px;top:1364.1px;font:400 26px/1 'Liberation Sans', sans-serif;color:#111827;white-space:pre;transform:scaleX(0.8367);transform-origin:0 0;-webkit-text-stroke:0.3px #111827;">Check if the element is deleted when click on the "delete" button</span><span style="position:absolute;left:2383.0px;top:1368.0px;font:400 21px/1 'Liberation Sans', sans-serif;color:#fff;white-space:pre;transform:scaleX(0.9263);transform-origin:0 0;-webkit-text-stroke:0.45px #fff;">manual</span>
<div style="position:absolute;left:124px;top:1300px;width:1292px;height:70px;background:linear-gradient(to bottom, rgba(0,0,0,0), rgba(0,0,0,0.012) 50%, rgba(0,0,0,0.065));-webkit-mask-image:linear-gradient(to right, transparent, black 12%);"></div><div style="position:absolute;left:2588px;top:940px;width:224px;height:430px;background:#fff;"></div><div style="position:absolute;left:2813px;top:940px;width:8px;height:412px;background:#c7d2fe;border-radius:4px;"></div><div style="position:absolute;left:1416px;top:1300px;width:1412px;height:70px;background:linear-gradient(to bottom, rgba(0,0,0,0), rgba(0,0,0,0.01) 50%, rgba(0,0,0,0.045));"></div>
</div></body></html>
